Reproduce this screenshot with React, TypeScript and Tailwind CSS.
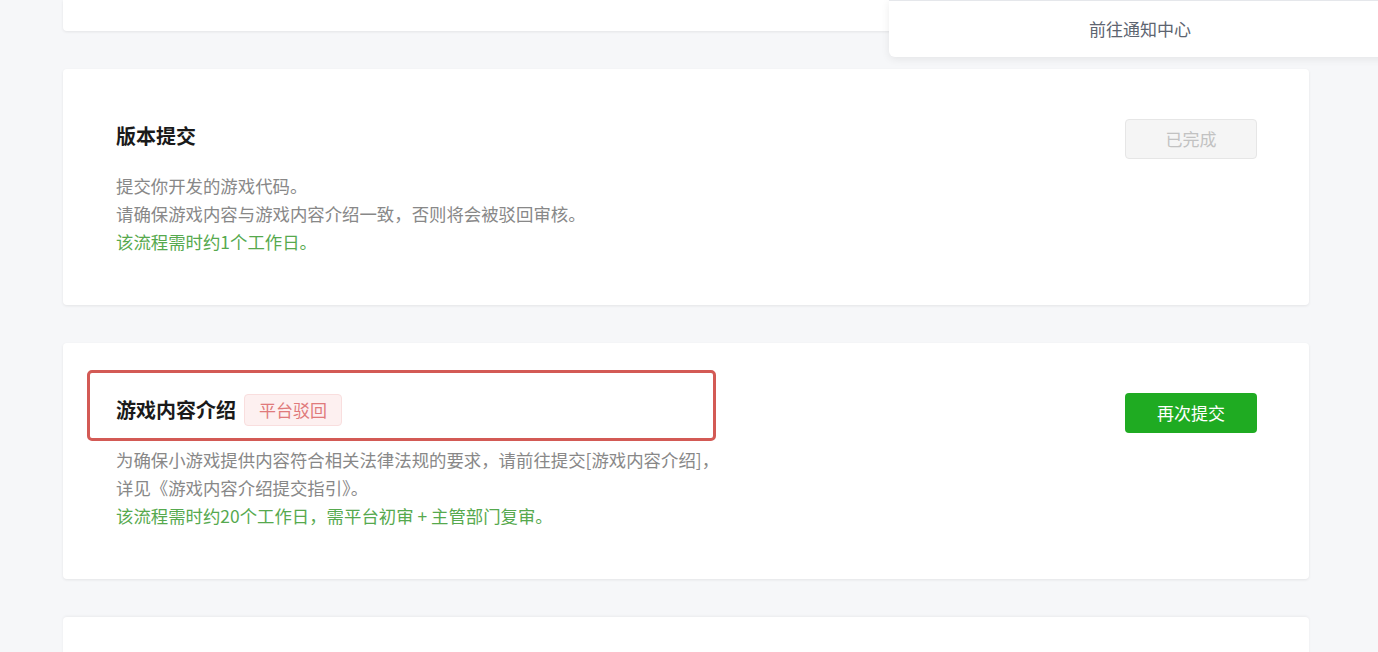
import React from 'react';

interface StepCardProps {
  title: string;
  badge?: string;
  lines: string[];
  note: string;
  action: React.ReactNode;
  highlight?: boolean;
}

const StepCard: React.FC<StepCardProps> = ({ title, badge, lines, note, action, highlight }) => {
  return (
    <div className="relative bg-white rounded-[4px] shadow-[0_1px_3px_rgba(0,0,0,0.08)] pl-[53px] pr-[52px] pt-[50px] pb-[49px]">
      <div className="flex items-center justify-between h-10">
        <div className="flex items-center -mt-[6px]">
          <h3 className="text-[20px] font-bold text-[#1a1a1a] leading-8">{title}</h3>
          {badge && (
            <span className="ml-[8px] h-8 px-[14px] flex items-center rounded-[4px] border border-[#f9dede] bg-[#fdf0f0] text-[17px] text-[#e07a7b]">
              {badge}
            </span>
          )}
        </div>
        {action}
      </div>
      <div className="mt-[13px] text-[17.4px] leading-[28px]">
        {lines.map((l) => (
          <p key={l} className="text-[#888888]">{l}</p>
        ))}
        <p className="text-[#56a94e]">{note}</p>
      </div>
      {highlight && (
        <div className="absolute left-[24px] top-[27px] w-[629px] h-[71px] border-[3px] border-[#d35a55] rounded-[5px] pointer-events-none" />
      )}
    </div>
  );
};

export default function App() {
  return (
    <div
      className="relative min-h-[652px] bg-[#f6f7f9] pl-[63px] pr-[69px] overflow-hidden"
      style={{ fontFamily: '"Microsoft YaHei", "Noto Sans CJK SC", sans-serif' }}
    >
      <div className="flex flex-col gap-[38px]">
        <div className="h-[31px] bg-white rounded-b-[4px] shadow-[0_1px_3px_rgba(0,0,0,0.08)]" />

        <StepCard
          title="版本提交"
          lines={['提交你开发的游戏代码。', '请确保游戏内容与游戏内容介绍一致，否则将会被驳回审核。']}
          note="该流程需时约1个工作日。"
          action={
            <button className="w-[132px] h-10 rounded-[4px] border border-[#e6e6e6] bg-[#f5f5f5] text-[17px] text-[#c2c2c2]">
              已完成
            </button>
          }
        />

        <StepCard
          title="游戏内容介绍"
          badge="平台驳回"
          highlight
          lines={[
            '为确保小游戏提供内容符合相关法律法规的要求，请前往提交[游戏内容介绍]，',
            '详见《游戏内容介绍提交指引》。',
          ]}
          note="该流程需时约20个工作日，需平台初审 + 主管部门复审。"
          action={
            <button className="w-[132px] h-10 rounded-[4px] bg-[#1fab22] text-[17px] text-white">
              再次提交
            </button>
          }
        />

        <div className="h-[40px] bg-white rounded-t-[4px] shadow-[0_-1px_3px_rgba(0,0,0,0.05)]" />
      </div>

      <div className="absolute left-[889px] top-0 w-[500px] h-[57px] bg-white border-t border-[#e5e7eb] rounded-bl-[6px] shadow-[0_2px_8px_rgba(0,0,0,0.08)] flex items-center pl-[200px]">
        <span className="text-[17px] text-[#5d6470]">前往通知中心</span>
      </div>
    </div>
  );
}
